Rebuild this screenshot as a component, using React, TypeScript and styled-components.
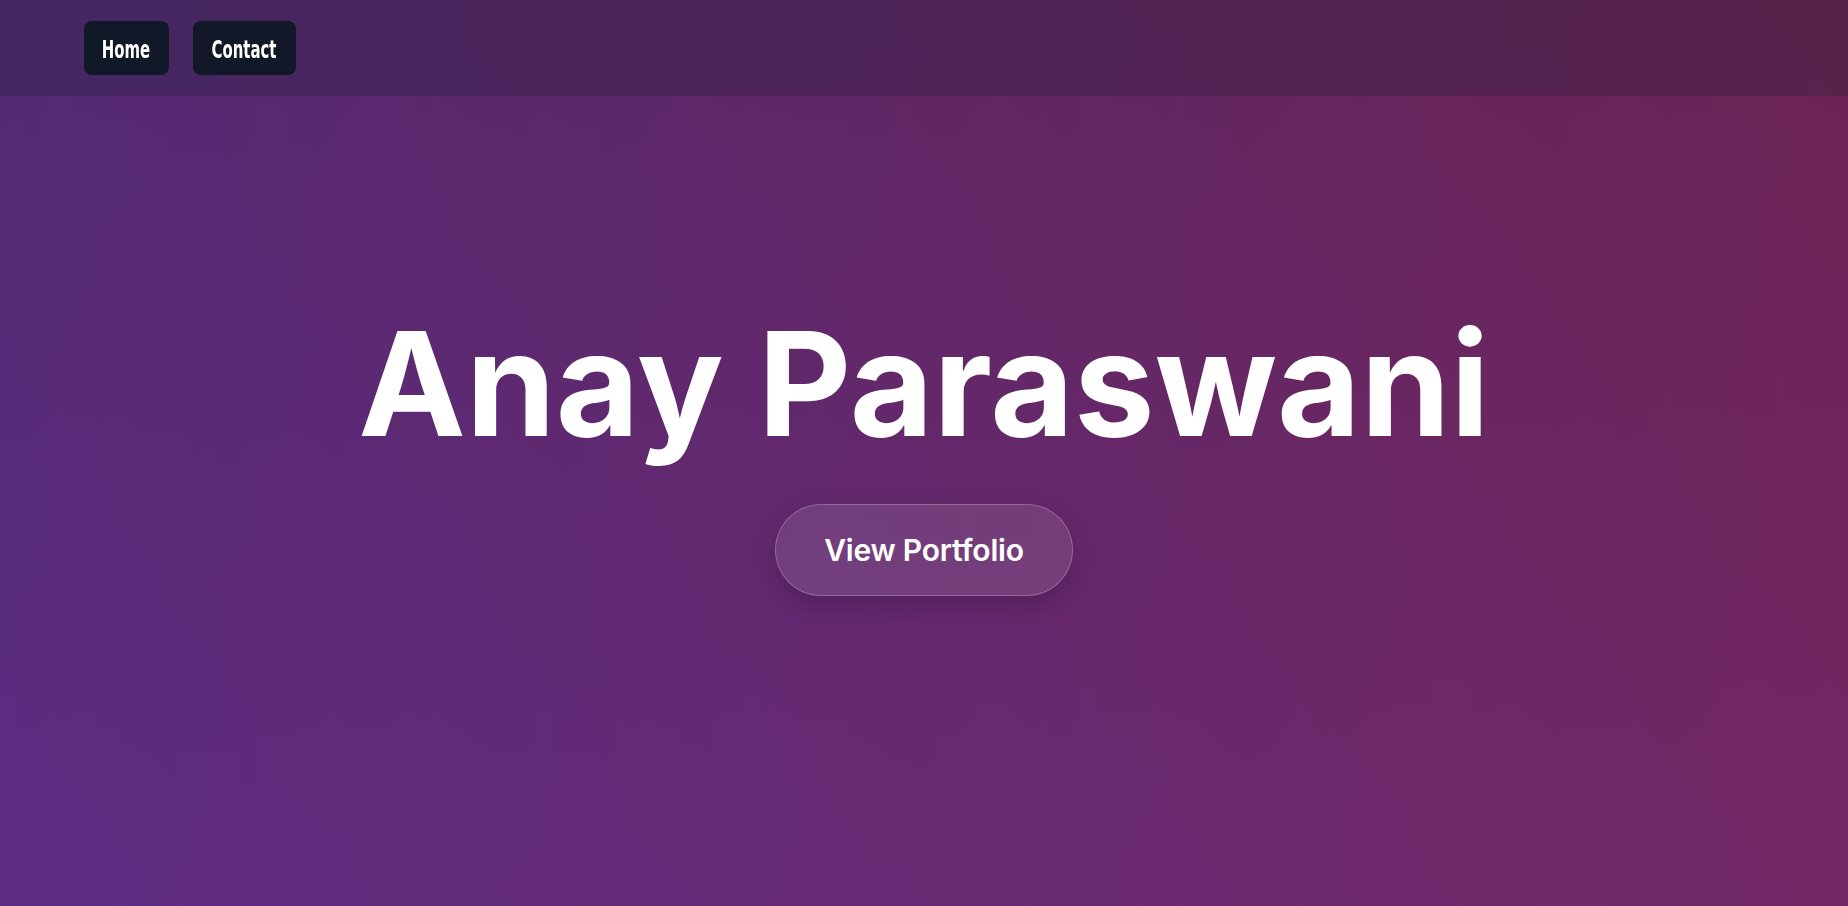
import styled, { createGlobalStyle } from 'styled-components';

const GlobalStyle = createGlobalStyle`
  * {
    box-sizing: border-box;
  }

  body {
    margin: 0;
    font-family: Inter, 'Liberation Sans', sans-serif;
    color: #ffffff;
    background: #5a2a7a;
  }
`;

const Page = styled.div`
  min-height: 100vh;
  padding-bottom: 5px;
  display: flex;
  flex-direction: column;
  align-items: center;
  justify-content: center;
  background:
    linear-gradient(to bottom, rgba(0, 0, 0, 0.08), rgba(110, 50, 170, 0.15)),
    linear-gradient(to right, #5a2c7c, #742659);
`;

// header sits over the hero, hero stays centred in the whole window
const Nav = styled.nav`
  position: fixed;
  top: 0;
  left: 0;
  right: 0;
  height: 96px;
  display: flex;
  align-items: center;
  gap: 24px;
  padding: 0 84px;
  background: rgba(20, 30, 45, 0.22);
`;

const NavButton = styled.button<{ $width: number }>`
  width: ${props => props.$width}px;
  height: 54px;
  padding: 3px 0 0;
  display: flex;
  align-items: center;
  justify-content: center;
  border: none;
  border-radius: 8px;
  background: #111827;
  color: #ffffff;
  cursor: pointer;
`;

const NavLabel = styled.span`
  display: inline-block;
  font: 700 24px/1 'DejaVu Sans Condensed', 'DejaVu Sans', sans-serif;
  transform: scaleX(0.69);
  white-space: nowrap;
`;

const Title = styled.h1`
  margin: 0 0 40px;
  font: 700 144px/1.1 Inter, 'Liberation Sans', sans-serif;
  letter-spacing: 0.15px;
  text-align: center;
`;

const PortfolioButton = styled.button`
  padding: 27px 48px;
  border: 1px solid rgba(255, 255, 255, 0.22);
  border-radius: 999px;
  background: rgba(255, 255, 255, 0.1);
  box-shadow: 0 10px 24px rgba(40, 10, 50, 0.3);
  color: #ffffff;
  font: 600 30px/36px Inter, 'Liberation Sans', sans-serif;
  letter-spacing: -0.2px;
  cursor: pointer;
`;

const App = () => {
  const links = [
    { label: 'Home', width: 85 },
    { label: 'Contact', width: 103 },
  ];

  return (
    <>
      <GlobalStyle />
      <Page>
        <Nav>
          {links.map(link => (
            <NavButton key={link.label} $width={link.width}>
              <NavLabel>{link.label}</NavLabel>
            </NavButton>
          ))}
        </Nav>
        <Title>Anay Paraswani</Title>
        <PortfolioButton>View Portfolio</PortfolioButton>
      </Page>
    </>
  );
};

export default App;
